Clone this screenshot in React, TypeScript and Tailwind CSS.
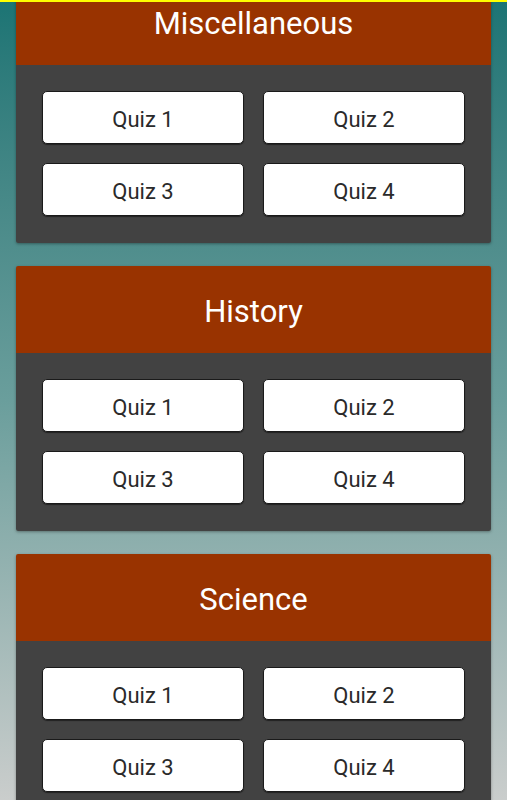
import React from "react";

const categories = ["Miscellaneous", "History", "Science"];

function Card({ title }: { title: string }) {
  return (
    <div className="rounded-[2px] shadow-[0_1px_3px_rgba(0,0,0,0.35)] overflow-hidden">
      <div className="h-[87px] pt-[4px] bg-[#993300] flex items-center justify-center">
        <span className="text-white text-[31px] leading-none">{title}</span>
      </div>
      <div className="bg-[#424242] px-[26px] pt-[26px] pb-[27px] grid grid-cols-2 gap-x-[19px] gap-y-[19px]">
        {["Quiz 1", "Quiz 2", "Quiz 3", "Quiz 4"].map((q) => (
          <button
            key={q}
            className="h-[53px] pt-[4px] bg-white rounded-[5px] border border-[#1a1a1a] text-[#2a2a2a] text-[22px] leading-none flex items-center justify-center shadow-[0_1px_1px_rgba(0,0,0,0.5)]"
          >
            {q}
          </button>
        ))}
      </div>
    </div>
  );
}

export default function App() {
  return (
    <div
      className="relative h-[800px] w-full overflow-hidden bg-gradient-to-b from-[#1b7474] via-[#6a9e9c] to-[#cacdcc]"
      style={{ fontFamily: "Roboto, 'Noto Sans', sans-serif" }}
    >
      <div className="absolute top-0 left-0 right-0 h-[2px] bg-[#ffff00] z-10" />
      <div className="mt-[-22px] px-[16px] flex flex-col gap-[23px]">
        {categories.map((c) => (
          <Card key={c} title={c} />
        ))}
      </div>
    </div>
  );
}
